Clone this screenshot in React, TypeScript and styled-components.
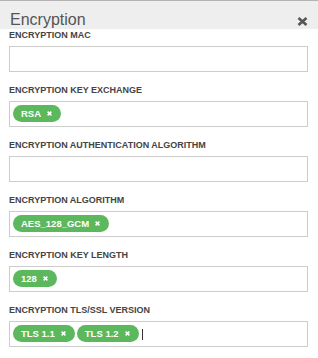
import styled, { createGlobalStyle } from "styled-components";

const GlobalStyle = createGlobalStyle`
  body {
    margin: 0;
    background: #fff;
    font-family: "Liberation Sans", Arial, Helvetica, sans-serif;
  }
`;

const StyledPanel = styled.div`
  width: 318px;
  height: 358px;
  overflow: hidden;
  background: #fff;
`;

const StyledHeader = styled.div`
  display: flex;
  justify-content: space-between;
  align-items: flex-start;
  box-sizing: border-box;
  height: 29px;
  padding: 11px 10px 0 10px;
  border-top: 1px solid #b3b3b3;
  background-color: #eeeeee;
`;

const StyledTitle = styled.div`
  font-size: 16px;
  line-height: 16px;
  color: #555;
  position: relative;
  z-index: 1;
`;

const StyledClose = styled.svg`
  margin-top: 5px;
  width: 11px;
  height: 9px;
`;

const StyledForm = styled.div`
  display: flex;
  flex-direction: column;
  gap: 13px;
  padding: 1px 10px 0 9px;
`;

const StyledField = styled.div`
  display: flex;
  flex-direction: column;
  gap: 5px;
`;

const StyledLabel = styled.div`
  font-size: 9px;
  line-height: 11px;
  font-weight: bold;
  color: #444;
  text-transform: uppercase;
`;

const StyledInput = styled.div`
  display: flex;
  align-items: flex-start;
  gap: 2px;
  box-sizing: border-box;
  height: 26px;
  padding: 3px;
  border: 1px solid #cccccc;
  background: #fff;
`;

const StyledPill = styled.span`
  display: inline-flex;
  align-items: center;
  gap: 6px;
  height: 17px;
  padding: 0 9px 0 8px;
  border-radius: 9px;
  background-color: #5cb85c;
  color: #fff;
  font-size: 9.5px;
  font-weight: bold;
  white-space: nowrap;
`;

const StyledPillX = styled.svg`
  width: 5px;
  height: 5px;
`;

const StyledCursor = styled.span`
  width: 1px;
  height: 11px;
  margin: 4px 0 0 1px;
  background: #333;
`;

type Field = { label: string; values: string[]; cursor?: boolean };

const fields: Field[] = [
  { label: "Encryption MAC", values: [] },
  { label: "Encryption Key Exchange", values: ["RSA"] },
  { label: "Encryption Authentication Algorithm", values: [] },
  { label: "Encryption Algorithm", values: ["AES_128_GCM"] },
  { label: "Encryption Key Length", values: ["128"] },
  { label: "Encryption TLS/SSL Version", values: ["TLS 1.1", "TLS 1.2"], cursor: true },
];

const Pill = ({ text }: { text: string }) => (
  <StyledPill>
    {text}
    <StyledPillX viewBox="0 0 5 5">
      <path d="M0.6 0.6 L4.4 4.4 M4.4 0.6 L0.6 4.4" stroke="#fff" strokeWidth="1.5" />
    </StyledPillX>
  </StyledPill>
);

const App = () => {
  return (
    <StyledPanel>
      <GlobalStyle />
      <StyledHeader>
        <StyledTitle>Encryption</StyledTitle>
        <StyledClose viewBox="0 0 11 9">
          <path d="M1.5 1 L9.5 8 M9.5 1 L1.5 8" stroke="#555" strokeWidth="2.6" />
        </StyledClose>
      </StyledHeader>
      <StyledForm>
        {fields.map((f) => (
          <StyledField key={f.label}>
            <StyledLabel>{f.label}</StyledLabel>
            <StyledInput>
              {f.values.map((v) => (
                <Pill key={v} text={v} />
              ))}
              {f.cursor && <StyledCursor />}
            </StyledInput>
          </StyledField>
        ))}
      </StyledForm>
    </StyledPanel>
  );
};

export default App;
